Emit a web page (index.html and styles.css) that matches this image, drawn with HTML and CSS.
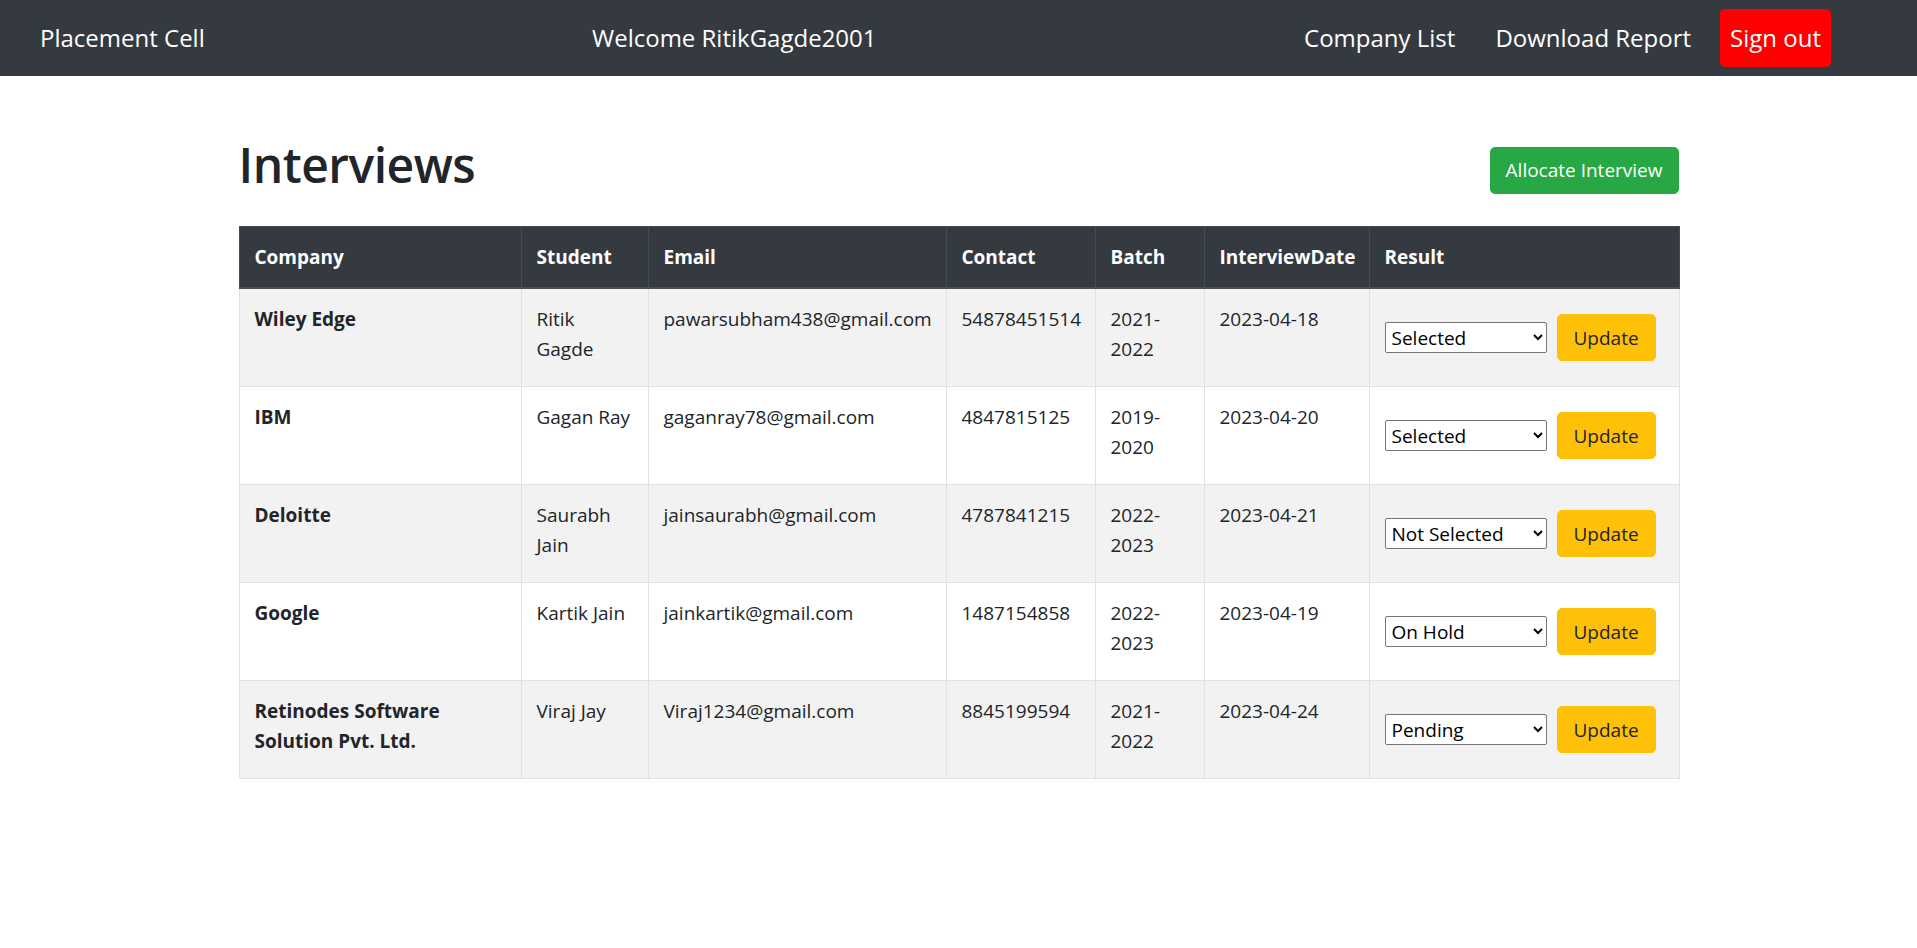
FILE: index.html
```html
<!DOCTYPE html>
<html lang="en">
<head>
<meta charset="utf-8">
<title>Interviews</title>
<link rel="stylesheet" href="styles.css">
</head>
<body>
<nav class="navbar">
  <a class="brand" href="#">Placement Cell</a>
  <span class="welcome">Welcome RitikGagde2001</span>
  <div class="nav-links">
    <a class="nav-link" href="#">Company List</a>
    <a class="nav-link" href="#">Download Report</a>
    <a class="nav-link signout" href="#">Sign out</a>
  </div>
</nav>
<main class="container">
  <div class="page-head">
    <h1>Interviews</h1>
    <a class="btn btn-success" href="#">Allocate Interview</a>
  </div>
  <table class="table">
    <colgroup>
      <col class="c-company"><col class="c-student"><col class="c-email"><col class="c-contact"><col class="c-batch"><col class="c-date"><col class="c-result">
    </colgroup>
    <thead>
      <tr><th>Company</th><th>Student</th><th>Email</th><th>Contact</th><th>Batch</th><th>InterviewDate</th><th>Result</th></tr>
    </thead>
    <tbody>
      <tr>
        <td class="company">Wiley Edge</td><td>Ritik Gagde</td><td>pawarsubham438@gmail.com</td><td>54878451514</td><td>2021-2022</td><td>2023-04-18</td>
        <td><form class="result-form"><select class="result-select"><option selected>Selected</option><option>Not Selected</option><option>On Hold</option><option>Pending</option></select><button type="button" class="btn btn-warning">Update</button></form></td>
      </tr>
      <tr>
        <td class="company">IBM</td><td>Gagan Ray</td><td>gaganray78@gmail.com</td><td>4847815125</td><td>2019-2020</td><td>2023-04-20</td>
        <td><form class="result-form"><select class="result-select"><option selected>Selected</option><option>Not Selected</option><option>On Hold</option><option>Pending</option></select><button type="button" class="btn btn-warning">Update</button></form></td>
      </tr>
      <tr>
        <td class="company">Deloitte</td><td>Saurabh Jain</td><td>jainsaurabh@gmail.com</td><td>4787841215</td><td>2022-2023</td><td>2023-04-21</td>
        <td><form class="result-form"><select class="result-select"><option>Selected</option><option selected>Not Selected</option><option>On Hold</option><option>Pending</option></select><button type="button" class="btn btn-warning">Update</button></form></td>
      </tr>
      <tr>
        <td class="company">Google</td><td>Kartik Jain</td><td>jainkartik@gmail.com</td><td>1487154858</td><td>2022-2023</td><td>2023-04-19</td>
        <td><form class="result-form"><select class="result-select"><option>Selected</option><option>Not Selected</option><option selected>On Hold</option><option>Pending</option></select><button type="button" class="btn btn-warning">Update</button></form></td>
      </tr>
      <tr>
        <td class="company">Retinodes Software Solution Pvt. Ltd.</td><td>Viraj Jay</td><td>Viraj1234@gmail.com</td><td>8845199594</td><td>2021-2022</td><td>2023-04-24</td>
        <td><form class="result-form"><select class="result-select"><option>Selected</option><option>Not Selected</option><option>On Hold</option><option selected>Pending</option></select><button type="button" class="btn btn-warning">Update</button></form></td>
      </tr>
    </tbody>
  </table>
</main>
</body>
</html>
```
FILE: styles.css
```css
* { box-sizing: border-box; }
html, body { margin: 0; padding: 0; }
body {
  font-family: "Open Sans", "Noto Sans", "Liberation Sans", sans-serif;
  font-size: 19px;
  line-height: 30px;
  color: #212529;
  background: #fff;
}
a { text-decoration: none; }

.navbar {
  display: flex;
  align-items: center;
  height: 76px;
  background: #343a40;
  padding: 0 86px 0 40px;
  color: #fff;
  font-size: 24px;
  line-height: 37.5px;
}
.brand { color: #fff; width: 552px; flex: none; }
.welcome { flex: 1; }
.nav-links { display: flex; align-items: center; }
.nav-link { color: #fff; padding: 10px 20px; }
.signout {
  background: #ff0000;
  border-radius: 5px;
  padding: 10px 10px;
  margin-left: 9px;
}

.container {
  width: 1440px;
  margin: 0 auto;
  padding-top: 59px;
}
.page-head {
  display: flex;
  align-items: center;
  justify-content: space-between;
  margin-bottom: 21px;
}
.page-head h1 {
  margin: 0 0 10px;
  font-size: 48px;
  line-height: 60px;
  font-weight: 600;
  letter-spacing: -0.5px;
}

.btn {
  display: inline-block;
  font-size: 19px;
  line-height: 30px;
  padding: 7.5px 15px;
  border: 1px solid transparent;
  border-radius: 5px;
  font-family: inherit;
}
.btn-success { background: #28a745; border-color: #28a745; color: #fff; }
.btn-warning { background: #ffc107; border-color: #ffc107; color: #212529; margin: 10px 0 10px 10px; padding: 7.5px 16px; }

.table {
  width: 1440px;
  border-collapse: collapse;
  table-layout: fixed;
  border: 1px solid #dee2e6;
}
.c-company { width: 282px; }
.c-student { width: 127px; }
.c-email { width: 298px; }
.c-contact { width: 149px; }
.c-batch { width: 109px; }
.c-date { width: 165px; }
.c-result { width: 310px; }

.table th, .table td {
  padding: 15px;
  text-align: left;
  vertical-align: top;
  border: 1px solid #dee2e6;
}
.table thead th {
  background: #343a40;
  color: #fff;
  border-color: #454d55;
  border-bottom-width: 2px;
  font-weight: 700;
  vertical-align: bottom;
}
.table tbody tr:nth-child(odd) { background: #f2f2f2; }
.company { font-weight: 700; }

.result-form { display: flex; align-items: center; margin: 0; }
.result-select {
  width: 162px;
  height: 31px;
  font-family: inherit;
  font-size: 19px;
  color: #000;
  background: #fff;
  border: 1px solid #767676;
  border-radius: 2px;
  padding: 0 2px;
}
```
